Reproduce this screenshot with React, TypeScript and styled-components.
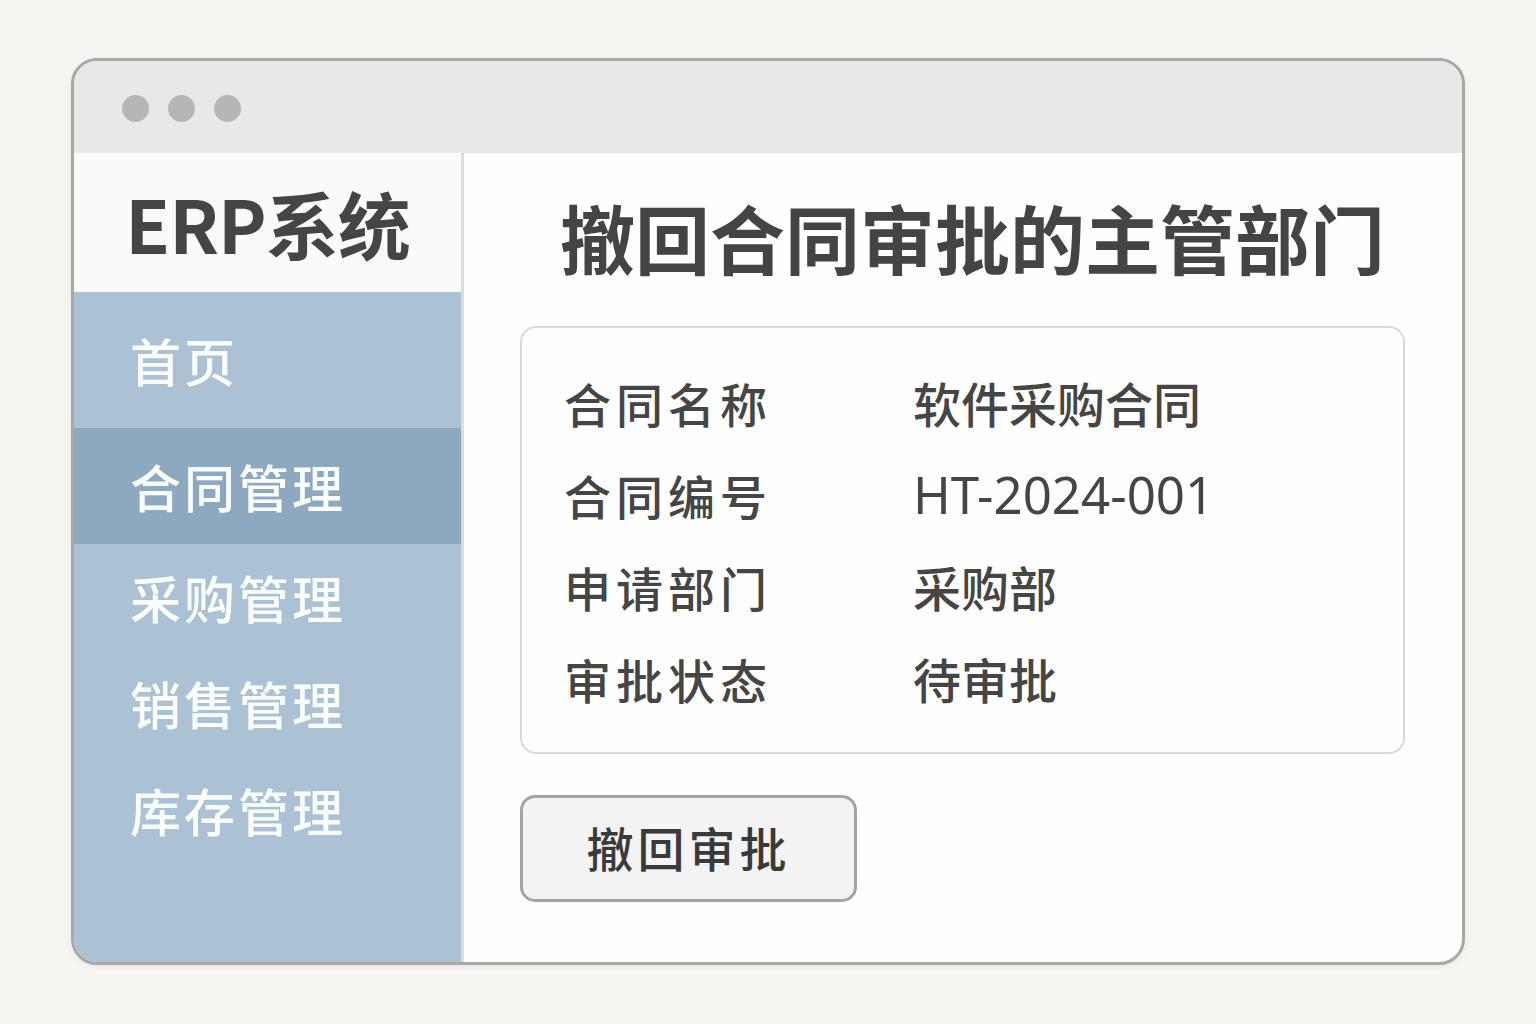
import React from "react";
import styled, { createGlobalStyle } from "styled-components";

const Global = createGlobalStyle`
  html, body { margin: 0; padding: 0; }
  body {
    background: #f6f5f2;
    font-family: "Noto Sans CJK SC", "Noto Sans", sans-serif;
  }
`;

const Page = styled.div`
  width: 1536px;
  height: 1024px;
  box-sizing: border-box;
  padding: 58px 71px;
`;

const Frame = styled.div`
  width: 1394px;
  height: 907px;
  box-sizing: border-box;
  border: 3px solid #a8a8a8;
  border-radius: 26px;
  overflow: hidden;
  display: flex;
  flex-direction: column;
  background: #fefefe;
  box-shadow: 0 2px 6px rgba(0, 0, 0, 0.06);
`;

const TitleBar = styled.div`
  height: 92px;
  flex: none;
  background: #e8e8e8;
  display: flex;
  align-items: center;
  gap: 19px;
  padding-left: 48px;
  padding-top: 2px;
  box-sizing: border-box;
`;

const Dot = styled.span`
  width: 27px;
  height: 27px;
  border-radius: 50%;
  background: #b6b6b6;
`;

const Body = styled.div`
  flex: 1;
  display: grid;
  grid-template-columns: 390px 1fr;
  min-height: 0;
`;

const Sidebar = styled.aside`
  display: flex;
  flex-direction: column;
  background: #aac2d3;
  border-right: 3px solid #dcdcdc;
`;

const Logo = styled.div`
  height: 139px;
  flex: none;
  background: #fafafa;
  display: flex;
  align-items: center;
  justify-content: center;
  font-size: 73px;
  font-weight: 700;
  color: #454545;
  letter-spacing: -1px;
  padding-bottom: 2px;
  box-sizing: border-box;
`;

const Menu = styled.nav`
  display: flex;
  flex-direction: column;
`;

const MenuItem = styled.div<{ $active?: boolean; $h: number }>`
  height: ${(p) => p.$h}px;
  display: flex;
  align-items: center;
  padding-left: 56px;
  font-size: 51px;
  font-weight: 500;
  letter-spacing: 3px;
  color: #fbfcfd;
  background: ${(p) => (p.$active ? "#8ca9bf" : "transparent")};
`;

const Main = styled.main`
  padding: 39px 0 0 56px;
  display: flex;
  flex-direction: column;
  align-items: flex-start;
`;

const Title = styled.h1`
  margin: 0 0 44px 40px;
  font-size: 75px;
  line-height: 90px;
  font-weight: 700;
  color: #444;
  letter-spacing: 0;
`;

const Card = styled.div`
  width: 885px;
  box-sizing: border-box;
  border: 2px solid #d9d9d9;
  border-radius: 16px;
  padding: 28px 0 28px 42px;
  display: grid;
  grid-template-columns: 349px 1fr;
  grid-auto-rows: 92px;
  align-items: center;
`;

const Label = styled.div`
  font-size: 47px;
  font-weight: 500;
  color: #454545;
  letter-spacing: 5px;
`;

const Value = styled.div<{ $latin?: boolean }>`
  font-family: ${(p) =>
    p.$latin ? `"Noto Sans", "Noto Sans CJK SC", sans-serif` : `"Noto Sans CJK SC", sans-serif`};
  font-size: ${(p) => (p.$latin ? 51 : 48)}px;
  font-weight: ${(p) => (p.$latin ? 400 : 500)};
  color: #454545;
  letter-spacing: 0;
`;

const Button = styled.button`
  margin-top: 41px;
  width: 337px;
  height: 107px;
  box-sizing: border-box;
  border: 3px solid #a4a4a4;
  border-radius: 15px;
  background: #f3f3f3;
  font-family: inherit;
  font-size: 47px;
  font-weight: 500;
  color: #3a3a3a;
  letter-spacing: 4px;
  padding: 0 0 4px 0;
  cursor: pointer;
`;

const menu = [
  { label: "首页", h: 136 },
  { label: "合同管理", h: 116, active: true },
  { label: "采购管理", h: 106 },
  { label: "销售管理", h: 106 },
  { label: "库存管理", h: 108 },
];

const rows = [
  ["合同名称", "软件采购合同"],
  ["合同编号", "HT-2024-001"],
  ["申请部门", "采购部"],
  ["审批状态", "待审批"],
];

export default function App() {
  return (
    <>
      <Global />
      <Page>
        <Frame>
          <TitleBar>
            <Dot />
            <Dot />
            <Dot />
          </TitleBar>
          <Body>
            <Sidebar>
              <Logo>ERP系统</Logo>
              <Menu>
                {menu.map((m) => (
                  <MenuItem key={m.label} $active={m.active} $h={m.h}>
                    {m.label}
                  </MenuItem>
                ))}
              </Menu>
            </Sidebar>
            <Main>
              <Title>撤回合同审批的主管部门</Title>
              <Card>
                {rows.map(([k, v]) => (
                  <React.Fragment key={k}>
                    <Label>{k}</Label>
                    <Value $latin={/^[\x00-\x7f]+$/.test(v)}>{v}</Value>
                  </React.Fragment>
                ))}
              </Card>
              <Button>撤回审批</Button>
            </Main>
          </Body>
        </Frame>
      </Page>
    </>
  );
}
